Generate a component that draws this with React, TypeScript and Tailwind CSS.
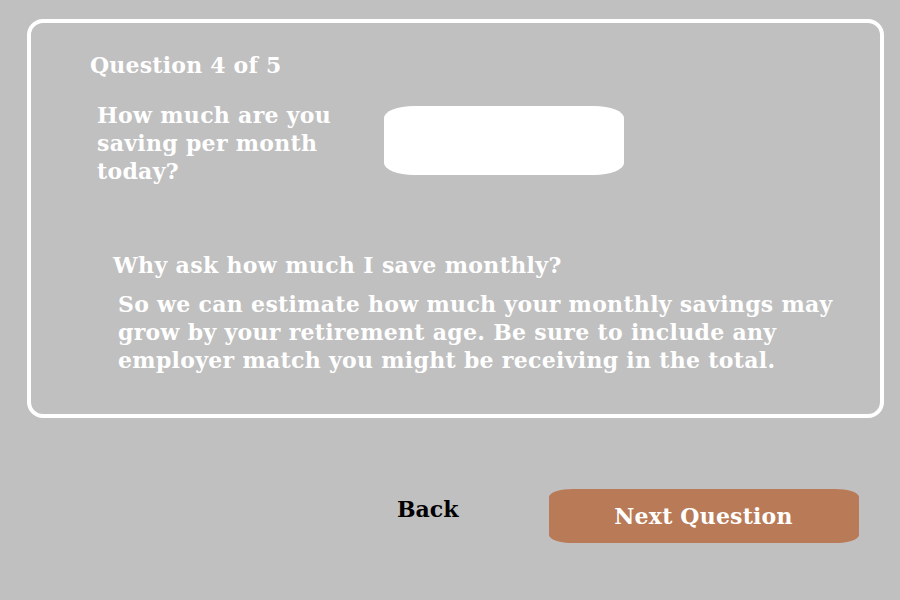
import React from "react";

const font = { fontFamily: '"DejaVu Serif", "Liberation Serif", serif' };

export default function App() {
  return (
    <div className="w-[900px] h-[600px] bg-[#c0c0c0] overflow-hidden pt-[19px] pl-[27px]" style={font}>
      <div className="w-[857px] h-[399px] border-4 border-white rounded-[16px] pl-[59px] pt-[28px]">
        <div className="text-white font-bold text-[22px] leading-[28px] tracking-[0.2px]">Question 4 of 5</div>
        <div className="flex mt-[22px]">
          <div className="ml-[7px] w-[260px] text-white font-bold text-[22px] leading-[28px] tracking-[0.3px]">
            How much are you saving per month today?
          </div>
          <div className="ml-[27px] mt-[5px] w-[240px] h-[69px] bg-white rounded-[30px/12px]"></div>
        </div>
        <div className="ml-[23px] mt-[66px] text-white font-bold text-[22px] leading-[28px] tracking-[0.35px]">
          Why ask how much I save monthly?
        </div>
        <div className="ml-[28px] mt-[11px] w-[740px] text-white font-bold text-[22px] leading-[28px] tracking-[0.3px]">
          So we can estimate how much your monthly savings may grow by your retirement age. Be sure to include any employer match you might be receiving in the total.
        </div>
      </div>
      <div className="flex items-start mt-[71px]">
        <div className="ml-[370px] mt-[6px] text-black font-bold text-[22px] leading-[28px]">Back</div>
        <div className="ml-[90px] w-[310px] h-[54px] bg-[#b97a57] rounded-[24px/8px] flex items-center justify-center text-white font-bold text-[22px] tracking-[0.2px]">
          Next Question
        </div>
      </div>
    </div>
  );
}
